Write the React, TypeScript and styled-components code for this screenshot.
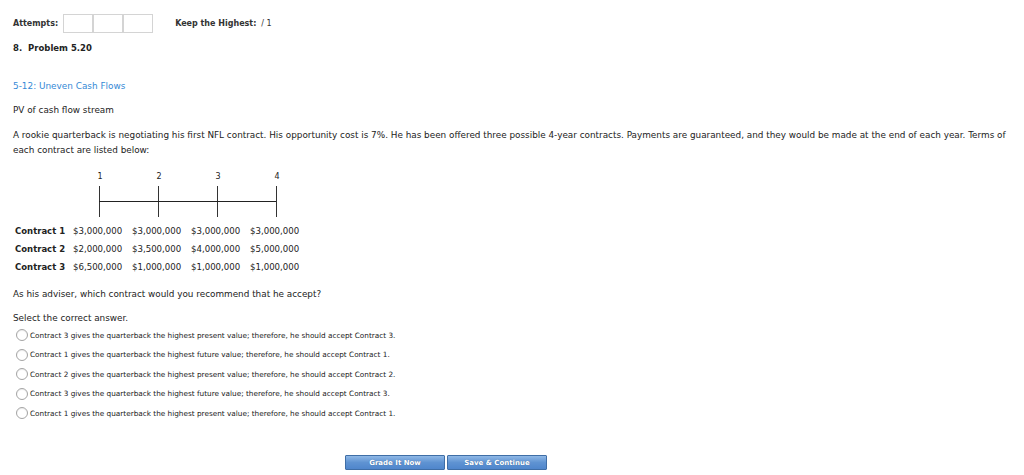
import styled, { createGlobalStyle } from "styled-components";

const GlobalStyle = createGlobalStyle`
  html, body {
    margin: 0;
    padding: 0;
    background: #ffffff;
  }
  body {
    font-family: "DejaVu Sans", Verdana, sans-serif;
    color: #222222;
    font-size: 8.85px;
  }
`;

const years = [1, 2, 3, 4];

const contracts = [
  { name: "Contract 1", values: ["$3,000,000", "$3,000,000", "$3,000,000", "$3,000,000"] },
  { name: "Contract 2", values: ["$2,000,000", "$3,500,000", "$4,000,000", "$5,000,000"] },
  { name: "Contract 3", values: ["$6,500,000", "$1,000,000", "$1,000,000", "$1,000,000"] },
];

const answers = [
  "Contract 3 gives the quarterback the highest present value; therefore, he should accept Contract 3.",
  "Contract 1 gives the quarterback the highest future value; therefore, he should accept Contract 1.",
  "Contract 2 gives the quarterback the highest present value; therefore, he should accept Contract 2.",
  "Contract 3 gives the quarterback the highest future value; therefore, he should accept Contract 3.",
  "Contract 1 gives the quarterback the highest present value; therefore, he should accept Contract 1.",
];

export default function App() {
  return (
    <>
      <GlobalStyle />
      <Page>
        <TopBar>
          <Label>Attempts:</Label>
          <AttemptBoxes>
            <AttemptBox />
            <AttemptBox />
            <AttemptBox />
          </AttemptBoxes>
          <Label $gap>Keep the Highest:</Label>
          <Score>/ 1</Score>
        </TopBar>
        <ProblemTitle>8.&nbsp; Problem 5.20</ProblemTitle>

        <TopicLink>5-12: Uneven Cash Flows</TopicLink>
        <Para $top={11}>PV of cash flow stream</Para>
        <Para $top={10}>
          A rookie quarterback is negotiating his first NFL contract. His opportunity cost is 7%. He has been
          offered three possible 4-year contracts. Payments are guaranteed, and they would be made at the end
          of each year. Terms of each contract are listed below:
        </Para>

        <Timeline>
          <YearRow>
            {years.map((y) => (
              <YearCell key={y}>{y}</YearCell>
            ))}
          </YearRow>
          <TickRow>
            {years.map((y) => (
              <Tick key={y} $first={y === 1} $last={y === 4} />
            ))}
          </TickRow>
          <ContractTable>
            {contracts.map((c) => (
              <ContractRow key={c.name}>
                <ContractName>{c.name}</ContractName>
                {c.values.map((v, i) => (
                  <Amount key={i}>{v}</Amount>
                ))}
              </ContractRow>
            ))}
          </ContractTable>
        </Timeline>

        <Para $top={11}>As his adviser, which contract would you recommend that he accept?</Para>
        <Para $top={9}>Select the correct answer.</Para>

        <AnswerList>
          {answers.map((a, i) => (
            <Answer key={i}>
              <Radio />
              <AnswerText>{a}</AnswerText>
            </Answer>
          ))}
        </AnswerList>

        <ButtonBar>
          <ActionButton>Grade It Now</ActionButton>
          <ActionButton>Save &amp; Continue</ActionButton>
        </ButtonBar>
      </Page>
    </>
  );
}

const Page = styled.div`
  width: 1024px;
  height: 475px;
  box-sizing: border-box;
  padding: 14px 0 0 13px;
  overflow: hidden;
`;

const TopBar = styled.div`
  display: flex;
  align-items: center;
  height: 19px;
`;

const Label = styled.span<{ $gap?: boolean }>`
  font-weight: bold;
  font-size: 8px;
  color: #333333;
  margin-left: ${(p) => (p.$gap ? "22px" : "0")};
  margin-right: 5px;
`;

const Score = styled.span`
  font-size: 8px;
  color: #333333;
`;

const AttemptBoxes = styled.div`
  display: flex;
  border: 1px solid #d4d4d4;
  height: 17px;
`;

const AttemptBox = styled.div`
  width: 28px;
  height: 17px;
  & + & {
    border-left: 2px solid #d4d4d4;
  }
`;

const ProblemTitle = styled.div`
  font-weight: bold;
  font-size: 8.5px;
  line-height: 12px;
  color: #222222;
  margin-top: 9px;
`;

const TopicLink = styled.div`
  color: #3489d6;
  font-size: 8.9px;
  line-height: 12px;
  margin-top: 26px;
`;

const Para = styled.div<{ $top: number }>`
  line-height: 15px;
  width: 1000px;
  margin-top: ${(p) => p.$top}px;
`;

const Timeline = styled.div`
  display: flex;
  flex-direction: column;
  margin-top: 13px;
  margin-left: 2px;
`;

const YearRow = styled.div`
  display: grid;
  grid-template-columns: repeat(4, 59px);
  margin-left: 58px;
`;

const YearCell = styled.div`
  padding-left: 22px;
  width: 10px;
  text-align: center;
  font-size: 8px;
  height: 12px;
  line-height: 12px;
`;

const TickRow = styled.div`
  display: grid;
  grid-template-columns: repeat(4, 59px);
  margin-left: 58px;
  height: 31px;
  margin-top: 3px;
`;

const Tick = styled.div<{ $first?: boolean; $last?: boolean }>`
  position: relative;
  &::before {
    content: "";
    position: absolute;
    left: 26px;
    top: 0;
    bottom: 0;
    border-left: 1px solid #333333;
  }
  &::after {
    content: "";
    position: absolute;
    top: 15px;
    left: ${(p) => (p.$first ? "26px" : "0")};
    right: ${(p) => (p.$last ? "33px" : "0")};
    border-top: 1px solid #222222;
  }
`;

const ContractTable = styled.div`
  display: flex;
  flex-direction: column;
  margin-top: 5px;
`;

const ContractRow = styled.div`
  display: grid;
  grid-template-columns: 58px repeat(4, 59px);
  height: 18px;
  align-items: center;
`;

const ContractName = styled.div`
  font-weight: bold;
  font-size: 8.5px;
  white-space: nowrap;
`;

const Amount = styled.div`
  font-size: 8.6px;
  white-space: nowrap;
`;

const AnswerList = styled.div`
  display: flex;
  flex-direction: column;
  gap: 7.5px;
  margin-top: 3px;
  margin-left: 3px;
`;

const Answer = styled.label`
  display: flex;
  align-items: center;
  gap: 2px;
  height: 12px;
`;

const Radio = styled.span`
  width: 10px;
  height: 10px;
  border-radius: 50%;
  border: 1px solid #a4a4a4;
  background: #ffffff;
  box-shadow: inset 0 1px 1px rgba(0, 0, 0, 0.08);
`;

const AnswerText = styled.span`
  font-size: 7.3px;
  color: #222222;
`;

const ButtonBar = styled.div`
  display: flex;
  gap: 2px;
  margin-top: 36px;
  margin-left: 332px;
`;

const ActionButton = styled.button`
  width: 100px;
  height: 15px;
  padding: 0;
  border: 1px solid #3f6ea6;
  border-radius: 1px;
  background: linear-gradient(#8fb8e6, #5f93d2 50%, #4f86cc);
  color: #ffffff;
  font-family: "DejaVu Sans", Verdana, sans-serif;
  font-size: 7px;
  font-weight: bold;
  text-shadow: 0 0 1px rgba(0, 0, 0, 0.3);
`;
